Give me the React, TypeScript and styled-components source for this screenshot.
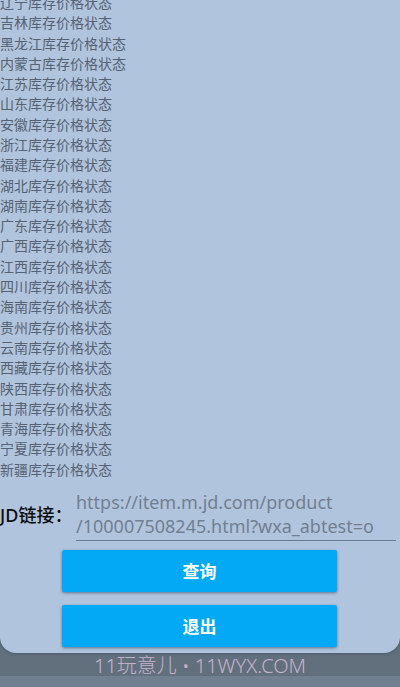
import React from "react";
import styled, { createGlobalStyle } from "styled-components";

const GlobalStyle = createGlobalStyle`
  * { box-sizing: border-box; }
  html, body { margin: 0; padding: 0; background: #708090; }
  body { font-family: "Noto Sans", "Noto Sans CJK SC", sans-serif; overflow: hidden; }
`;

const Page = styled.div`
  display: flex;
  flex-direction: column;
  height: 100vh;
  overflow: hidden;
`;

const Backdrop = styled.div`
  flex: 1;
  display: flex;
  flex-direction: column;
  min-height: 0;
  background: #62707e;
`;

const Panel = styled.main`
  flex: 1;
  display: flex;
  flex-direction: column;
  justify-content: flex-end;
  min-height: 0;
  overflow: hidden;
  background: #b0c4de;
  border-radius: 0 0 16px 16px;
  box-shadow: 0 1px 3px #4c5c69;
`;

const ProvinceList = styled.ul`
  flex: 1;
  display: grid;
  grid-auto-rows: 1fr;
  margin: -8px 0 0;
  padding: 0;
  list-style: none;
`;

const Province = styled.li`
  font-family: "Noto Sans CJK SC", sans-serif;
  font-size: 14px;
  line-height: 20px;
  color: #566272;
  white-space: nowrap;
`;

const LinkRow = styled.div`
  display: flex;
  align-items: center;
  padding: 10px 4px 0 0;
`;

const LinkLabel = styled.label`
  flex: 0 0 76px;
  font-family: "Noto Sans", "Noto Sans CJK SC", sans-serif;
  font-size: 18px;
  font-weight: 500;
  line-height: 24px;
  color: #0b0d10;
  white-space: nowrap;
`;

const LinkInput = styled.textarea`
  flex: 1;
  min-width: 0;
  height: 52px;
  margin: 0;
  padding: 1px 0 2px;
  border: 0;
  border-bottom: 1px solid #6c7a8c;
  border-radius: 0;
  outline: 0;
  resize: none;
  overflow: hidden;
  background: transparent;
  font-family: "Noto Sans", sans-serif;
  font-size: 18px;
  line-height: 24px;
  color: #727f91;
`;

const Actions = styled.div`
  display: flex;
  flex-direction: column;
  gap: 13px;
  padding: 9px 63px 6px 62px;
`;

const ActionButton = styled.button`
  height: 42px;
  padding: 0;
  border: 0;
  border-radius: 2px;
  background: #03a9f4;
  box-shadow: 0 1px 3px rgba(40, 60, 90, 0.6);
  color: #fff;
  font-family: "Noto Sans CJK SC", sans-serif;
  font-size: 17px;
  font-weight: 700;
  line-height: 24px;
`;

const Footer = styled.footer`
  flex: none;
  height: 23px;
  text-align: center;
  font-family: "Noto Sans", "Noto Sans CJK SC", sans-serif;
  font-size: 20px;
  font-weight: 300;
  line-height: 26px;
  color: #c2b2cf;
  white-space: nowrap;
`;

const BottomBar = styled.div`
  flex: none;
  height: 11px;
  background: #708090;
`;

const provinces = [
  "辽宁", "吉林", "黑龙江", "内蒙古", "江苏", "山东", "安徽", "浙江",
  "福建", "湖北", "湖南", "广东", "广西", "江西", "四川", "海南",
  "贵州", "云南", "西藏", "陕西", "甘肃", "青海", "宁夏", "新疆",
];

export default function App() {
  return (
    <Page>
      <GlobalStyle />
      <Backdrop>
        <Panel>
          <ProvinceList>
            {provinces.map((name) => (
              <Province key={name}>{name}库存价格状态</Province>
            ))}
          </ProvinceList>
          <LinkRow>
            <LinkLabel htmlFor="jd-link">JD链接：</LinkLabel>
            <LinkInput
              id="jd-link"
              spellCheck={false}
              defaultValue={"https://item.m.jd.com/product\n/100007508245.html?wxa_abtest=o"}
            />
          </LinkRow>
          <Actions>
            <ActionButton type="button">查询</ActionButton>
            <ActionButton type="button">退出</ActionButton>
          </Actions>
        </Panel>
        <Footer>11玩意儿 • 11WYX.COM</Footer>
      </Backdrop>
      <BottomBar />
    </Page>
  );
}
